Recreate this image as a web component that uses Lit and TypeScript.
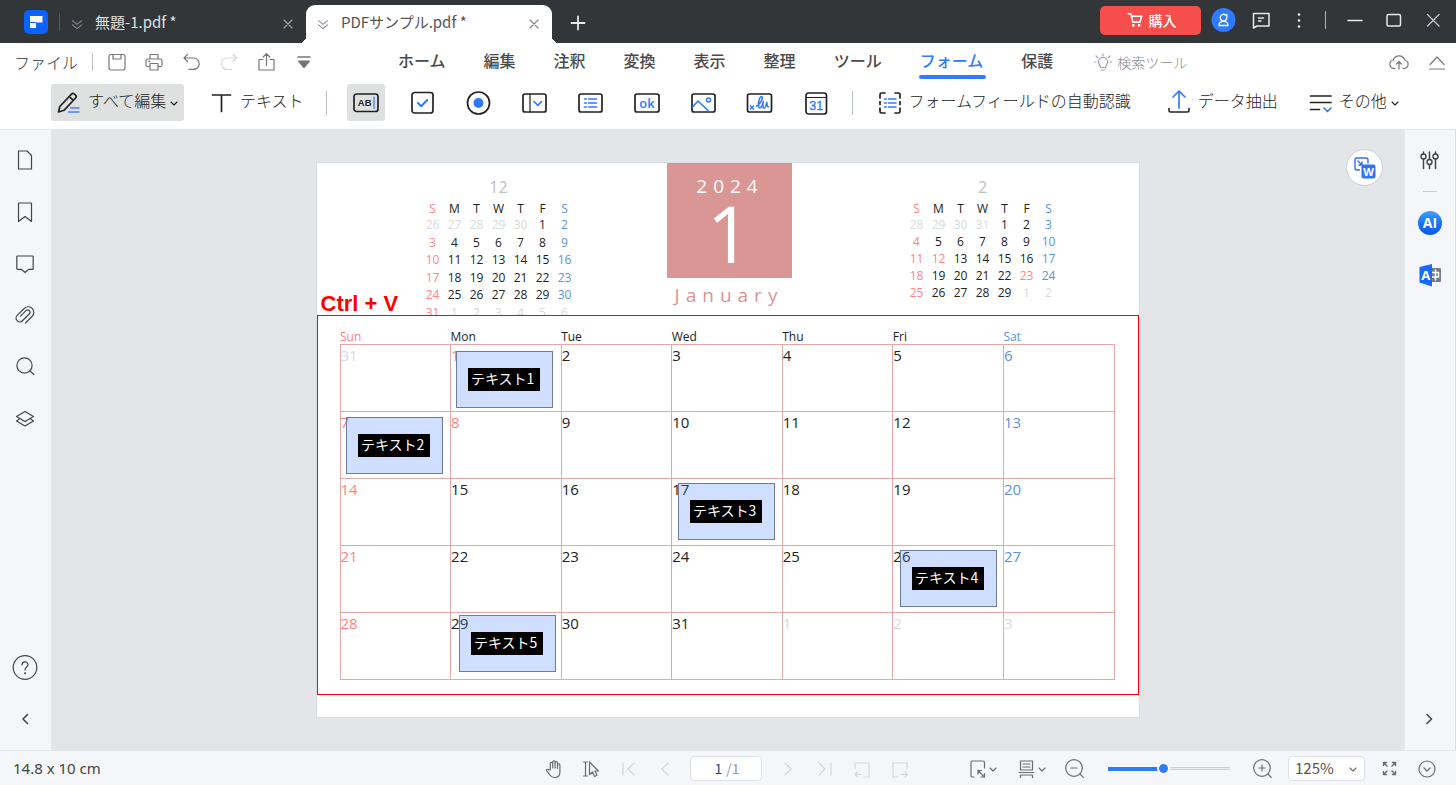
import { LitElement, html, css, svg } from "lit";
import { customElement, property } from "lit/decorators.js";
import { classMap } from "lit/directives/class-map.js";
import { styleMap } from "lit/directives/style-map.js";

const icons: Record<string, unknown> = {
  logo: svg`<rect width="24" height="24" rx="5" fill="#0a63ff" stroke="none"/><path d="M6 6h12.500v6.500H12v5.500H6z" fill="#fff" stroke="none"/><path d="M6 12.500h6" stroke="#0a63ff" stroke-width="1"/>`,
  tabMenu: svg`<path d="M6.500 8l5.500 4.500L17.500 8M6.500 13l5.500 4.500 5.500-4.500" stroke-width="1.300"/>`,
  x: svg`<path d="M6 6l12 12M18 6l-12 12" stroke-width="1.700"/>`,
  plus: svg`<path d="M5.500 13h13M12 6.500v13" stroke-width="1.800"/>`,
  cart: svg`<path d="M4 4.500h3l2.400 10h8.600L20 7.500H8" stroke-width="1.900"/><circle cx="10" cy="18.500" r="1.600" fill="currentColor" stroke="none"/><circle cx="17" cy="18.500" r="1.600" fill="currentColor" stroke="none"/>`,
  user: svg`<circle cx="12.500" cy="12" r="12" fill="#2f7bff" stroke="none"/><path d="M15.800 6.500v3a3.300 3.300 0 1 1-1-2.300M8 17.500c0-5.500 9-5.500 9 0z" stroke="#fff" stroke-width="1.300"/>`,
  comment: svg`<path d="M4.500 5.500h15.500v12.500H8l-3.500 2zM9.500 10h5M9.500 13h2.500" stroke-width="1.500"/>`,
  dots: svg`<g fill="currentColor" stroke="none"><circle cx="12" cy="6.500" r="1.300"/><circle cx="12" cy="12.500" r="1.300"/><circle cx="12" cy="18.500" r="1.300"/></g>`,
  minimize: svg`<path d="M5 12.500h14" stroke-width="1.500"/>`,
  maximize: svg`<rect x="5" y="6.500" width="13.500" height="11.500" rx="1.500" stroke-width="1.500"/>`,
  close: svg`<path d="M6.500 6.500l11.500 11.500M18 6.500L6.500 18" stroke="#c3c7d4" stroke-width="1.300"/>`,
  save: svg`<rect x="4" y="4.500" width="16" height="15.500" rx="2"/><path d="M8 4.500V9h8V4.500"/>`,
  print: svg`<path d="M8 9V4.500h8V9M8 16.500H5.500A1.500 1.500 0 0 1 4 15v-4.500A1.500 1.500 0 0 1 5.500 9h13a1.500 1.500 0 0 1 1.500 1.500V15a1.500 1.500 0 0 1-1.500 1.500H16M8 13.500h8V20H8zM6.500 11.300h1.500"/>`,
  undo: svg`<path d="M8.500 4.500L5 8l3.500 3.500M5 8h9.500a5.700 5.700 0 0 1 0 11.400H10"/>`,
  redo: svg`<path d="M17 4.500L20.500 8 17 11.500M20.500 8H11a5.700 5.700 0 0 0 0 11.400h4.500"/>`,
  share: svg`<path d="M10 9.500H6V20h15V9.500h-4M13.500 15.500V4M10.200 7l3.300-3.300L16.800 7"/>`,
  more: svg`<path d="M8 7h12" stroke-width="1.500"/><path d="M8.500 11h11L14 17.500z" fill="currentColor"/>`,
  bulb: svg`<path d="M9.500 17.500c0-2-2-2.500-2-5.500a4.500 4.500 0 0 1 9 0c0 3-2 3.500-2 5.500zM10 20h4M12 6V4M6.500 7.500L5 6M17.500 7.500L19 6M5 12H3.500M20.500 12H19"/>`,
  cloud: svg`<path d="M8 18.500H7a4.300 4.300 0 0 1-.7-8.500 6 6 0 0 1 11.400 0A4.300 4.300 0 0 1 17 18.500h-1M12 19v-7M9.500 14L12 11.500l2.500 2.500"/>`,
  collapse: svg`<path d="M5 14.500l7-7.500 7 7.500M4.500 19h15"/>`,
  pencil: svg`<path d="M2.500 21l1.300-5.500L15.500 3.200c.9-.9 2-.9 2.900-.1l1.100 1c.9.800.9 2 .1 2.900L8 19.300zM13.300 5.500l4 3.900" stroke-width="1.700"/><path d="M14.500 17h8.500M12.500 21h10.500" stroke="#4b83f5" stroke-width="1.500"/>`,
  text: svg`<path d="M3.500 4h18M12.500 4v16.500" stroke-width="1.700"/>`,
  chev: svg`<path d="M7.500 10.500l4.500 4.500 4.500-4.500" stroke-width="1.700"/>`,
  textField: svg`<rect x="0" y="3" width="24" height="17.500" rx="2.500" stroke-width="1.700"/><text x="3.800" y="15.200" font-size="9.500" font-weight="700" font-family="Liberation Sans, sans-serif" fill="currentColor" stroke="none">AB</text><path d="M20 6v11.500" stroke="#2f7bff"/>`,
  check: svg`<rect x="2" y="1.500" width="21" height="20.500" rx="2.500" stroke-width="1.700"/><path d="M8 12l3.200 3.200 6-6.200" stroke="#2f7bff" stroke-width="2"/>`,
  radio: svg`<circle cx="12.500" cy="12" r="11" stroke-width="1.700"/><circle cx="12.500" cy="12" r="5" fill="#2f7bff" stroke="none"/>`,
  combo: svg`<rect x="1" y="3" width="23" height="18" rx="2" stroke-width="1.700"/><path d="M8 3v18"/><path d="M12 10.500l3.800 3.800 3.800-3.800" stroke="#2f7bff" stroke-width="1.700"/>`,
  list: svg`<rect x="1" y="3" width="23" height="18" rx="2" stroke-width="1.700"/><path d="M10.500 8h8M10.500 12h8M10.500 16h8" stroke="#2f7bff" stroke-width="1.600"/><path d="M6.500 8h1.800M6.500 12h1.800M6.500 16h1.800" stroke="#2f7bff" stroke-width="1.600"/>`,
  ok: svg`<rect x="1" y="3" width="24" height="18" rx="2" stroke-width="1.700"/><text x="13" y="17" text-anchor="middle" font-size="13" font-weight="600" font-family="Open Sans, sans-serif" fill="#2f7bff" stroke="none">ok</text>`,
  image: svg`<rect x="2" y="3" width="23" height="18" rx="2" stroke-width="1.700"/><path d="M3 15.500l5-5.500L19 20.500" stroke="#2f7bff" stroke-width="1.700"/><circle cx="18.500" cy="9" r="2" stroke="#2f7bff" stroke-width="1.500"/>`,
  sign: svg`<rect x="1.500" y="3" width="24" height="18" rx="2" stroke-width="1.700"/><path d="M4.500 15l3 3M7.500 15l-3 3M10.500 15c3.500-1.500 7.500-8.500 5-9.500-2.500 0-4.500 11.500-1.800 11.500 2.300 0 3.300-5 3.700-6.500-.8 3-1 6.500.7 6.500 1.600 0 2.200-3.500 2.600-5.500.5 2 .4 4.500 1.800 4.500" stroke="#2f7bff" stroke-width="1.600"/>`,
  date: svg`<rect x="4" y="2" width="20.500" height="21" rx="2.500" stroke-width="1.700"/><path d="M4.500 6.500h19.500"/><text x="14.200" y="19.300" text-anchor="middle" font-size="12.500" font-family="Liberation Sans, sans-serif" fill="#2f7bff" stroke="#2f7bff" stroke-width=".3">31</text>`,
  detect: svg`<path d="M7 2H3.500A1.500 1.500 0 0 0 2 3.500V7M17 2h3.500A1.500 1.500 0 0 1 22 3.500V7M2 17v3.500A1.500 1.500 0 0 0 3.500 22H7M22 17v3.500a1.500 1.500 0 0 1-1.500 1.500H17M2 10.500v3M22 10.500v3" stroke-width="1.700"/><path d="M10.500 8H18M10.500 12H18M10.500 16H18M6.500 8h1.800M6.500 12h1.800M6.500 16h1.800" stroke="#2f7bff" stroke-width="1.600"/>`,
  extract: svg`<path d="M2 17.500v2A1.500 1.500 0 0 0 3.500 21h17a1.500 1.500 0 0 0 1.500-1.500v-2" stroke-width="1.600"/><path d="M12 17V0M6 6l6-6 6 6" stroke="#2f7bff" stroke-width="1.700"/>`,
  others: svg`<path d="M2.500 5h20.500M2.500 11.500h20.500M2.500 18.500h9" stroke-width="1.700"/><path d="M16 17l3.500 3.500 3.500-3.500" stroke="#2f7bff" stroke-width="1.700"/>`,
  page: svg`<path d="M5.500 3h8.500l4.500 4.500V21h-13z"/>`,
  bookmark: svg`<path d="M5.500 3h13v18.500L12 16.500l-6.500 5z"/>`,
  note: svg`<path d="M4.500 4h15a.7.700 0 0 1 .7.700v12a.7.700 0 0 1-.7.700H15.500L12 20.500l-3.500-3.100H4.500a.7.700 0 0 1-.7-.7v-12A.7.700 0 0 1 4.500 4z"/>`,
  clip: svg`<path d="M12.500 19l6.500-6.500a5 5 0 0 0-7.500-8.300l-7.300 7.200a3.700 3.700 0 0 0 5.200 5.400l6.900-6.800a2.300 2.300 0 0 0-3.300-3.300L7.500 12.200"/>`,
  search: svg`<circle cx="11.500" cy="9.500" r="7.600"/><path d="M17 15l3.800 3.500"/>`,
  layers: svg`<path d="M12 3.500l8.500 5L12 13.500l-8.500-5zM6 11.300l-2.500 1.700L12 18l8.500-5-2.500-1.700"/>`,
  help: svg`<circle cx="12" cy="12.500" r="11.800"/><path d="M9 10c0-4 6-4 6-.3 0 2.400-3 2.400-3 5.300"/><circle cx="12" cy="18.200" r="1" fill="currentColor" stroke="none"/>`,
  left: svg`<path d="M14.500 7.500L10 12l4.500 4.500" stroke-width="1.600"/>`,
  right: svg`<path d="M9 7.500l4.500 4.500L9 16.500" stroke-width="1.600"/>`,
  sliders: svg`<path d="M5.500 4v2M5.500 11v9.500M11.500 4v7.500M11.500 16.500v4M17.500 4v2M17.500 11v9.500" stroke-width="1.500"/><g stroke-width="1.400"><circle cx="5.500" cy="8.500" r="2.500"/><circle cx="11.500" cy="14" r="2.500"/><circle cx="17.500" cy="8.500" r="2.500"/></g>`,
  ai: svg`<defs><linearGradient id="sky" x1="0" y1="0" x2="0" y2="1"><stop offset="0" stop-color="#3fa2ff"/><stop offset=".55" stop-color="#1372f5"/><stop offset="1" stop-color="#0a5ce8"/></linearGradient></defs><circle cx="12" cy="12" r="12" fill="url(#sky)" stroke="none"/><text x="12" y="17" text-anchor="middle" font-size="14" font-weight="700" font-family="Open Sans, sans-serif" fill="#fff" stroke="none">AI</text>`,
  translate: svg`<rect x="12" y="5" width="11" height="14" rx="1" fill="#747b8c" stroke="none"/><path d="M14 9.500h6.500v4.500H14M17.500 7v10" stroke="#fff" stroke-width="1.500"/><path d="M1.500 4L14 1v22.500L1.500 19.500z" fill="#1769ff" stroke="none"/><text x="7.800" y="17" text-anchor="middle" font-size="13" font-weight="700" font-family="Open Sans, sans-serif" fill="#fff" stroke="none">A</text>`,
  word: svg`<path d="M6.500 14H4a2 2 0 0 1-2-2V4a2 2 0 0 1 2-2h9a2 2 0 0 1 2 2v3M5 5l4 4M9 6v3H6" stroke="#2f6ff0" stroke-width="1.400"/><rect x="8.500" y="8.500" width="14" height="14" rx="2" fill="#2f74f2" stroke="none"/><text x="15.500" y="19.500" text-anchor="middle" font-size="11" font-weight="700" font-family="Open Sans, sans-serif" fill="#fff" stroke="none">W</text>`,
  hand: svg`<path d="M8.300 13V6.500a1.200 1.200 0 0 1 2.400 0V11 5a1.200 1.200 0 0 1 2.400 0v6V5.700a1.200 1.200 0 0 1 2.400 0V11.500 8a1.200 1.200 0 0 1 2.400 0v7c0 3.500-2 5.500-5 5.500-3.500 0-4.500-1.500-8-6.500-.8-1.300.5-2.300 1.700-1.300z"/>`,
  cursor: svg`<path d="M4.500 5h4M6.500 5v14M4.500 19h4M10.500 5v12.500l3-2.500 2 4.500 2.500-1.200-2-4.300h3.500z"/>`,
  first: svg`<path d="M7 6v12M18 6l-6 6 6 6"/>`,
  prev: svg`<path d="M15 6l-6 6 6 6"/>`,
  next: svg`<path d="M10 6l6 6-6 6"/>`,
  last: svg`<path d="M7 6l6 6-6 6M19 6v12"/>`,
  back: svg`<path d="M6 11V6h14v14h-5M12 17.500H6M8.500 15L6 17.500 8.500 20"/>`,
  forward: svg`<path d="M12 20H7V6h14v6M15 17.500h6.500M19 15l2.500 2.500L19 20"/>`,
  fit: svg`<path d="M9 20H7.500A1.500 1.500 0 0 1 6 18.500v-13A1.500 1.500 0 0 1 7.500 4h10.500A1.500 1.500 0 0 1 19.500 5.500V11M13 13.500l6.500 6.500M13 17v-3.500h3.500M19.500 16.500V20H16"/>`,
  layout: svg`<path d="M6.500 4h12v9h-12zM9 7h7M9 10h7M5 15.500h15M6.500 20.500V18h12v2.500"/>`,
  zoomOut: svg`<circle cx="11" cy="11" r="8.300"/><path d="M17 17l3.300 3.300M8 11h6"/>`,
  zoomIn: svg`<circle cx="11" cy="11" r="8.300"/><path d="M17 17l3.300 3.300M8 11h6M11 8v6"/>`,
  full: svg`<path d="M9 9L5.500 5.500M14 9l3.500-3.500M9 14l-3.500 3.500M14 14l3.500 3.500M5.500 8.500v-3h3M14.500 5.500h3v3M5.500 14.500v3h3M14.500 17.500h3v-3" stroke-width="1.400"/>`,
  circleDown: svg`<circle cx="12" cy="12" r="8"/><path d="M9 11l3 3 3-3"/>`,
};

const icon = (name: string, size = 24) => html`<svg
  class="icon" width=${size} height=${size} viewBox="0 0 24 24" fill="none" stroke="currentColor"
  stroke-width="1.2" stroke-linecap="round" stroke-linejoin="round" aria-hidden="true"
>${icons[name]}</svg>`;

const iconButton = (name: string, label: string, extra = "") =>
  html`<button class="ib ${extra}" aria-label=${label}>${icon(name)}</button>`;

const base = css`
  * { box-sizing: border-box; }
  button { font: inherit; color: inherit; background: none; border: 0; padding: 0; cursor: default; }
  input, select { font: inherit; color: inherit; }
  .icon { display: block; flex: none; overflow: visible; }
  .ib { width: 24px; height: 24px; flex: none; }
  .sep { width: 1px; flex: none; background: #b9bfca; }
`;

/* Title strip with document tabs and window controls */
@customElement("title-strip")
class TitleStrip extends LitElement {
  static styles = [base, css`
    :host { display: flex; align-items: center; height: 43px; background: #323639; color: #e6e8ea; padding: 0 11px 0 24px; }
    .logo-sep { height: 18px; margin-left: 11px; background: #55595d; }
    .tabs { display: flex; align-self: flex-end; height: 38px; }
    .tab { position: relative; display: flex; align-items: center; gap: 8px; width: 246px; padding: 0 10px 0 7px; color: #dfe1e3; }
    .tab.active { background: #fff; color: #555; border-radius: 9px 9px 0 0; }
    .tab.active::before, .tab.active::after { content: ""; position: absolute; bottom: 0; width: 7px; height: 7px; }
    .tab.active::before { left: -7px; background: radial-gradient(circle at 0 0, transparent 7px, #fff 7px); }
    .tab.active::after { right: -7px; background: radial-gradient(circle at 100% 0, transparent 7px, #fff 7px); }
    .name { flex: 1; font-size: 15px; line-height: 22px; text-align: left; padding-bottom: 4px; white-space: nowrap; }
    .mark { color: #868d9c; }
    .shut { color: #a3a9b5; }
    .active .shut { color: #7c828e; }
    .add { margin-left: 14px; }
    .right { display: flex; align-items: center; gap: 10px; margin-left: auto; padding-bottom: 3px; }
    .group { display: flex; gap: 14px; }
    .buy { display: flex; align-items: center; justify-content: center; gap: 4px; width: 101px; height: 29px; border-radius: 5px; background: #f54e4c; color: #fff; font-size: 14px; font-weight: 500; }
    .line { height: 18px; margin: 0 7px 0 4px; background: #aab0bc; }
    .win { display: flex; gap: 15px; }
  `];
  private tab(name: string, active = false) {
    return html`<div class=${classMap({ tab: true, active })} role="tab">
      <span class="mark">${icon("tabMenu", 20)}</span>
      <button class="name">${name}</button>
      <button class="shut" aria-label="閉じる">${icon("x", 16)}</button>
    </div>`;
  }
  render() {
    return html`
      ${icon("logo")}
      <i class="sep logo-sep"></i>
      <div class="tabs" role="tablist">${this.tab("無題-1.pdf *")}${this.tab("PDFサンプル.pdf *", true)}</div>
      ${iconButton("plus", "新しいタブ", "add")}
      <div class="right">
        <button class="buy">${icon("cart", 20)}購入</button>
        <div class="group">${iconButton("user", "アカウント")}${iconButton("comment", "フィードバック")}${iconButton("dots", "メニュー")}</div>
        <i class="sep line"></i>
        <div class="win">${iconButton("minimize", "最小化")}${iconButton("maximize", "最大化")}${iconButton("close", "閉じる")}</div>
      </div>`;
  }
}

/* Main menu and the form tool row beneath it */
@customElement("ribbon-bar")
class RibbonBar extends LitElement {
  static styles = [base, css`
    :host { display: block; background: #fff; color: #333; border-bottom: 1px solid #e3e4e8; }
    .menu { display: flex; align-items: center; height: 37px; padding: 0 7px 0 14px; }
    .file { font-size: 16px; font-weight: 300; line-height: 24px; }
    .menu-sep { height: 18px; margin: 0 12px 0 14px; }
    .quick { display: flex; gap: 13px; color: #777; }
    .faded { color: #d8d8d8; }
    .items { display: flex; gap: 38px; margin-left: 84px; align-self: stretch; font-size: 16px; font-weight: 500; color: #4a4a4a; }
    .item { position: relative; line-height: 24px; padding-bottom: 4px; white-space: nowrap; }
    .item.active { color: #2f7bff; }
    .item.active::after { content: ""; position: absolute; left: -1px; right: -3px; bottom: 1px; height: 4px; border-radius: 2px; background: #2f7bff; }
    .find { display: flex; align-items: center; gap: 2px; margin-left: 38px; color: #98a1b0; }
    .find input { width: 90px; border: 0; padding: 0; outline: 0; background: none; font-size: 14px; font-weight: 300; line-height: 20px; }
    .find input::placeholder { color: #8a8a8a; opacity: 1; }
    .end { display: flex; gap: 14px; margin-left: auto; color: #777; }
    .tools { display: flex; align-items: center; padding: 4px 0 8px 51px; font-size: 16px; font-weight: 300; line-height: 24px; color: #222; white-space: nowrap; }
    .tool { display: flex; align-items: center; gap: 7px; height: 37px; }
    .tool .label { padding-bottom: 6px; }
    .tool.pick { width: 133px; padding-left: 5px; gap: 8px; background: #dfe0e0; border-radius: 3px; }
    .drop { display: flex; align-items: center; }
    .tool.type { margin-left: 25px; }
    .tool-sep { height: 24px; margin: 0 20px 0 22px; }
    .fields { display: flex; gap: 18px; }
    .field { display: flex; align-items: center; justify-content: center; width: 38px; height: 37px; border-radius: 3px; }
    .field.active { background: #dfe0e0; }
    .auto-sep { height: 24px; margin: 0 25px 0 19px; }
    .tool.extract { margin-left: 36px; }
    .tool.others { margin-left: 30px; }
  `];
  render() {
    const items = ["ホーム", "編集", "注釈", "変換", "表示", "整理", "ツール", "フォーム", "保護"];
    const fields = [
      ["textField", "テキストフィールド"], ["check", "チェックボックス"], ["radio", "ラジオボタン"],
      ["combo", "コンボボックス"], ["list", "リストボックス"], ["ok", "プッシュボタン"],
      ["image", "画像フィールド"], ["sign", "署名フィールド"], ["date", "日付フィールド"],
    ];
    return html`
      <div class="menu">
        <button class="file">ファイル</button>
        <i class="sep menu-sep"></i>
        <div class="quick">
          ${iconButton("save", "保存")}${iconButton("print", "印刷")}${iconButton("undo", "元に戻す")}
          ${iconButton("redo", "やり直し", "faded")}${iconButton("share", "共有")}${iconButton("more", "その他")}
        </div>
        <nav class="items">
          ${items.map((t) => html`<button class=${classMap({ item: true, active: t === "フォーム" })}>${t}</button>`)}
        </nav>
        <label class="find">${icon("bulb")}<input aria-label="検索ツール" placeholder="検索ツール" /></label>
        <div class="end">${iconButton("cloud", "アップロード")}${iconButton("collapse", "折りたたむ")}</div>
      </div>
      <div class="tools">
        <button class="tool pick">${icon("pencil")}<span class="drop"><span class="label">すべて編集</span>${icon("chev", 16)}</span></button>
        <button class="tool type">${icon("text", 24)}<span class="label">テキスト</span></button>
        <i class="sep tool-sep"></i>
        <div class="fields">
          ${fields.map(([n, l], i) => html`<button class=${classMap({ field: true, active: i === 0 })} aria-label=${l}>${icon(n)}</button>`)}
        </div>
        <i class="sep auto-sep"></i>
        <button class="tool">${icon("detect")}<span class="label">フォームフィールドの自動認識</span></button>
        <button class="tool extract">${icon("extract")}<span class="label">データ抽出</span></button>
        <button class="tool others">${icon("others")}<span class="drop"><span class="label">その他</span>${icon("chev", 16)}</span></button>
      </div>`;
  }
}

/* Small month overview; tones: r = holiday, b = Saturday, g = neighbouring month */
@customElement("mini-month")
class MiniMonth extends LitElement {
  @property() title = "";
  @property({ type: Array }) weeks: string[][] = [];
  @property({ type: Boolean, reflect: true }) roomy = false;
  static styles = [base, css`
    :host { display: block; width: 154px; }
    table { width: 100%; border-collapse: collapse; table-layout: fixed; font-size: 12px; line-height: 16px; text-align: center; color: #222; }
    caption { font-size: 16px; line-height: 20px; color: #bfbfbf; padding-bottom: 4px; }
    th, td { padding: 0; font-weight: 400; }
    th { height: 15px; line-height: 15px; }
    td { height: 17px; }
    :host([roomy]) tr:nth-child(odd) td { height: 18px; }
    .r { color: #ff8585; }
    .b { color: #5b93dc; }
    .g { color: #d9d9d9; }
  `];
  render() {
    return html`<table>
      <caption>${this.title}</caption>
      <thead><tr>${[..."SMTWTFS"].map((d, i) => html`<th class=${i === 0 ? "r" : i === 6 ? "b" : ""}>${d}</th>`)}</tr></thead>
      <tbody>${this.weeks.map((w) => html`<tr>${w.map((c) => html`<td class=${c.replace(/\d/g, "")}>${c.replace(/\D/g, "")}</td>`)}</tr>`)}</tbody>
    </table>`;
  }
}

const w = (s: string) => s.split(" ");
const december = [
  w("26g 27g 28g 29g 30g 1 2b"), w("3r 4 5 6 7 8 9b"), w("10r 11 12 13 14 15 16b"),
  w("17r 18 19 20 21 22 23b"), w("24r 25 26 27 28 29 30b"), w("31r 1g 2g 3g 4g 5g 6g"),
];
const february = [
  w("28g 29g 30g 31g 1 2 3b"), w("4r 5 6 7 8 9 10b"), w("11r 12r 13 14 15 16 17b"),
  w("18r 19 20 21 22 23r 24b"), w("25r 26 27 28 29 1g 2g"),
];
const january = [
  w("31g 1r 2 3 4 5 6b"), w("7r 8r 9 10 11 12 13b"), w("14r 15 16 17 18 19 20b"),
  w("21r 22 23 24 25 26 27b"), w("28r 29 30 31 1g 2g 3g"),
];
const formFields = [
  { text: "テキスト1", x: 139, y: 188 },
  { text: "テキスト2", x: 29, y: 254 },
  { text: "テキスト3", x: 361, y: 320 },
  { text: "テキスト4", x: 583, y: 387 },
  { text: "テキスト5", x: 142, y: 452 },
];

/* The PDF page with its calendar and the form fields lying over it */
@customElement("calendar-page")
class CalendarPage extends LitElement {
  static styles = [base, css`
    :host { display: block; position: relative; flex: none; width: 822px; background: #fff; box-shadow: 0 0 0 1px #d9dfe8; padding-bottom: 22px; font-family: "Open Sans", "Noto Sans", sans-serif; color: #222; }
    .head { display: flex; height: 152px; padding-left: 105px; }
    mini-month { margin-top: 14px; }
    .center { width: 125px; margin: 0 114px 0 91px; text-align: center; white-space: nowrap; }
    .banner { height: 115px; padding-top: 11px; background: #d99694; color: #fff; }
    .year { font-size: 19px; line-height: 24px; letter-spacing: 6px; padding-left: 2px; }
    .num { font-size: 78px; line-height: 70px; }
    .month { margin-top: 5px; color: #d99694; font-size: 19px; line-height: 24px; letter-spacing: 6px; }
    .frame { position: relative; background: #fff; border: 1px solid #f00; padding: 14px 23px 14px 22px; }
    table { width: 100%; border-collapse: collapse; table-layout: fixed; text-align: left; }
    th { padding: 0; font-size: 12px; font-weight: 400; line-height: 14px; }
    td { height: 67px; padding: 0; border: 1px solid #e3a9a9; vertical-align: top; font-size: 15px; line-height: 20px; }
    .r { color: #ff8080; }
    .b { color: #5b93dc; }
    .g { color: #d9d9d9; }
    .note { position: absolute; left: 4px; top: 128px; font: 700 22px/26px "Liberation Sans", sans-serif; color: #f00; }
    .field { position: absolute; display: flex; align-items: center; justify-content: center; width: 97px; height: 57px; border: 1px solid #6d7c9c; background: rgba(66, 124, 255, 0.25); }
    .field input { width: 72px; height: 23px; border: 0; border-radius: 0; padding: 0 0 4px 3px; background: #000; color: #fff; font: 14px/19px "Noto Sans CJK JP", sans-serif; outline: 0; }
  `];
  render() {
    const days = ["Sun", "Mon", "Tue", "Wed", "Thu", "Fri", "Sat"];
    return html`
      <div class="head">
        <mini-month title="12" roomy .weeks=${december}></mini-month>
        <div class="center">
          <div class="banner"><div class="year">2024</div><div class="num">1</div></div>
          <div class="month">January</div>
        </div>
        <mini-month title="2" .weeks=${february}></mini-month>
      </div>
      <div class="frame">
        <table>
          <thead><tr>${days.map((d, i) => html`<th class=${i === 0 ? "r" : i === 6 ? "b" : ""}>${d}</th>`)}</tr></thead>
          <tbody>${january.map((wk) => html`<tr>${wk.map((c) => html`<td class=${c.replace(/\d/g, "")}>${c.replace(/\D/g, "")}</td>`)}</tr>`)}</tbody>
        </table>
      </div>
      <div class="note">Ctrl + V</div>
      ${formFields.map((f) => html`<div class="field" style=${styleMap({ left: f.x + "px", top: f.y + "px" })}>
        <input aria-label=${f.text} .value=${f.text} />
      </div>`)}`;
  }
}

/* Status bar: page navigation and zoom */
@customElement("status-bar")
class StatusBar extends LitElement {
  static styles = [base, css`
    :host { display: grid; grid-template-columns: 1fr auto 1fr; align-items: center; box-sizing: border-box; height: 35px; background: #f5f6fa; border-top: 1px solid #e4e6ea; padding: 1px 17px 0 13px; color: #6b6b6b; }
    .size { font: 15px/20px "Noto Sans", sans-serif; color: #444; padding-bottom: 2px; }
    .nav, .view { display: flex; align-items: center; }
    .nav { gap: 13px; }
    .off { color: #d3d5d9; }
    .pages { display: flex; align-items: center; justify-content: center; width: 72px; height: 25px; background: #fff; border: 1px solid #e0e1e4; border-radius: 4px; font-size: 14px; line-height: 20px; color: #999; padding: 0 4px 2px 0; }
    .pages input { width: 18px; border: 0; padding: 0 4px 0 0; text-align: right; background: none; outline: 0; color: #234c80; }
    .view { gap: 13px; justify-content: flex-end; }
    .drop { display: flex; align-items: center; width: 36px; height: 24px; }
    .drop .icon + .icon { margin-left: -4px; }
    .slider { width: 122px; height: 14px; margin: 0 8px; appearance: none; background: linear-gradient(#2f7bff, #2f7bff) 0 5px / 50px 4px no-repeat, linear-gradient(#c9cede 0 1px, #e9ebf2 1px 2px, #c9cede 2px 3px) 50px 5px / 100% 3px no-repeat; outline: 0; }
    .slider::-webkit-slider-thumb { appearance: none; width: 13px; height: 13px; border-radius: 50%; border: 2px solid #fff; background: #2f7bff; }
    .zoom { position: relative; display: flex; align-items: center; width: 77px; height: 25px; }
    .zoom select { appearance: none; width: 100%; height: 25px; padding: 0 0 2px 6px; border: 1px solid #e0e1e4; border-radius: 4px; background: #fff; font-size: 15px; color: #555; }
    .zoom .icon { position: absolute; right: 4px; pointer-events: none; }
  `];
  render() {
    return html`
      <span class="size">14.8 x 10 cm</span>
      <div class="nav">
        ${iconButton("hand", "手のひら")}${iconButton("cursor", "選択")}${iconButton("first", "最初のページ", "off")}${iconButton("prev", "前のページ", "off")}
        <label class="pages"><input aria-label="ページ" .value=${"1"} />/1</label>
        ${iconButton("next", "次のページ", "off")}${iconButton("last", "最後のページ", "off")}${iconButton("back", "戻る", "off")}${iconButton("forward", "進む", "off")}
      </div>
      <div class="view">
        <button class="drop" aria-label="ページに合わせる">${icon("fit")}${icon("chev", 16)}</button>
        <button class="drop" aria-label="表示モード">${icon("layout")}${icon("chev", 16)}</button>
        ${iconButton("zoomOut", "縮小")}
        <input class="slider" type="range" min="0" max="100" .value=${"45"} aria-label="ズーム" />
        ${iconButton("zoomIn", "拡大")}
        <label class="zoom"><select aria-label="倍率"><option>125%</option></select>${icon("chev", 16)}</label>
        ${iconButton("full", "全画面")}${iconButton("circleDown", "その他")}
      </div>`;
  }
}

@customElement("app-root")
class AppRoot extends LitElement {
  static styles = [base, css`
    :host { display: flex; flex-direction: column; min-height: 100vh; font-family: "Noto Sans CJK JP", sans-serif; background: #f5f6fa; }
    .body { display: flex; flex: 1; min-height: 0; }
    .side { display: flex; flex-direction: column; align-items: center; gap: 28px; flex: none; width: 51px; padding: 18px 1px 19px 0; background: #f5f6fa; color: #444; }
    .side.tools { width: 52px; border-left: 1px solid #ebecf0; border-right: 1px solid #d8deeb; }
    .push { margin-top: auto; }
    .rule { width: 14px; height: 1px; margin: -9px 0; background: #c9cbd0; }
    .canvas { position: relative; display: flex; flex: 1; justify-content: center; align-items: flex-start; min-width: 0; padding: 33px 0 32px; background: #e4e5e9; overflow: hidden; }
    .convert { position: absolute; top: 19px; right: 21px; display: flex; align-items: center; justify-content: center; width: 37px; height: 37px; border-radius: 50%; background: #fff; border: 1px solid #c8cddb; }
  `];
  render() {
    return html`
      <title-strip></title-strip>
      <ribbon-bar></ribbon-bar>
      <div class="body">
        <aside class="side">
          ${iconButton("page", "サムネイル")}${iconButton("bookmark", "しおり")}${iconButton("note", "注釈")}
          ${iconButton("clip", "添付ファイル")}${iconButton("search", "検索")}${iconButton("layers", "レイヤー")}
          ${iconButton("help", "ヘルプ", "push")}${iconButton("left", "閉じる")}
        </aside>
        <main class="canvas">
          <calendar-page></calendar-page>
          <button class="convert" aria-label="Wordに変換">${icon("word")}</button>
        </main>
        <aside class="side tools">
          ${iconButton("sliders", "プロパティ")}<i class="rule"></i>${iconButton("ai", "AI")}${iconButton("translate", "翻訳")}
          ${iconButton("right", "開く", "push")}
        </aside>
      </div>
      <status-bar></status-bar>`;
  }
}
